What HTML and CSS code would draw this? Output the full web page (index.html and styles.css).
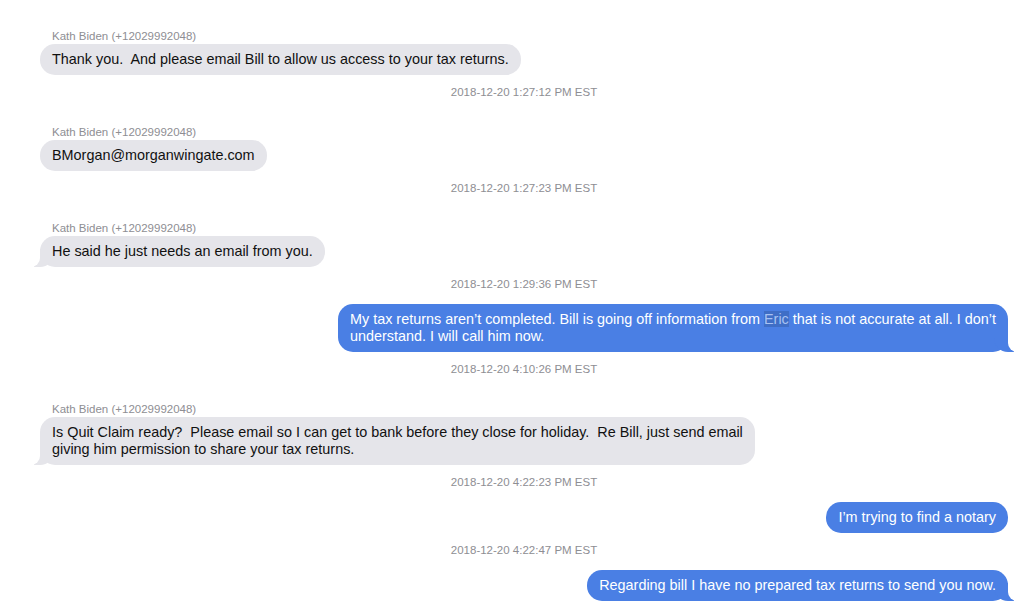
FILE: index.html
```html
<!DOCTYPE html>
<html lang="en">
  <head>
    <meta charset="UTF-8" />
    <meta name="viewport" content="width=device-width, initial-scale=1.0" />
    <title>Messages</title>

    <link rel="stylesheet" href="styles.css">
  </head>
  <body>
    <div class="thread">
      <p class="stamp">2018-12-20 1:26:55 PM EST</p>

      <div class="msg in">
        <p class="sender">Kath Biden (+12029992048)</p>
        <p class="bubble">Thank you.  And please email Bill to allow us access to your tax returns.</p>
      </div>
      <p class="stamp">2018-12-20 1:27:12 PM EST</p>

      <div class="msg in">
        <p class="sender">Kath Biden (+12029992048)</p>
        <p class="bubble">BMorgan@morganwingate.com</p>
      </div>
      <p class="stamp">2018-12-20 1:27:23 PM EST</p>

      <div class="msg in">
        <p class="sender">Kath Biden (+12029992048)</p>
        <p class="bubble tail">He said he just needs an email from you.</p>
      </div>
      <p class="stamp">2018-12-20 1:29:36 PM EST</p>

      <div class="msg out">
        <p class="bubble tail">My tax returns aren’t completed. Bill is going off information from <span class="hl">Eric</span> that is not accurate at all. I don’t<br>understand. I will call him now.</p>
      </div>
      <p class="stamp">2018-12-20 4:10:26 PM EST</p>

      <div class="msg in">
        <p class="sender">Kath Biden (+12029992048)</p>
        <p class="bubble tail">Is Quit Claim ready?  Please email so I can get to bank before they close for holiday.  Re Bill, just send email<br>giving him permission to share your tax returns.</p>
      </div>
      <p class="stamp">2018-12-20 4:22:23 PM EST</p>

      <div class="msg out">
        <p class="bubble">I’m trying to find a notary</p>
      </div>
      <p class="stamp">2018-12-20 4:22:47 PM EST</p>

      <div class="msg out">
        <p class="bubble tail">Regarding bill I have no prepared tax returns to send you now.</p>
      </div>
    </div>
  </body>
</html>
```

FILE: styles.css
```css
body {
  margin: 0;
  background: #fff;
  font-family: "Liberation Sans", Arial, sans-serif;
  overflow: hidden;
}

p {
  margin: 0;
}

.thread {
  display: flex;
  flex-direction: column;
  margin-top: -11px;
  padding: 0 16px 0 40px;
}

.stamp {
  align-self: center;
  margin-top: 10px;
  font-size: 11.5px;
  line-height: 14px;
  color: #8e8e93;
}

.stamp:first-child {
  margin-top: 0;
}

.msg {
  display: flex;
  flex-direction: column;
}

.msg.in {
  align-self: flex-start;
  margin-top: 26px;
}

.msg.out {
  align-self: flex-end;
  margin-top: 13px;
}

.sender {
  padding-left: 12px;
  margin-bottom: 1px;
  font-size: 11.5px;
  line-height: 14px;
  color: #8e8e93;
}

.bubble {
  position: relative;
  isolation: isolate;
  padding: 7px 12px;
  border-radius: 15px;
  font-size: 14.4px;
  line-height: 17px;
  white-space: pre;
}

.in .bubble {
  align-self: flex-start;
  background: #e5e5ea;
  color: #111;
}

.out .bubble {
  align-self: flex-end;
  background: #4a7fe4;
  color: #fff;
}

/* little curl at the bottom corner */
.bubble.tail::before,
.bubble.tail::after {
  content: "";
  position: absolute;
  bottom: 0;
  z-index: -1;
  height: 18px;
}

.in .bubble.tail::before {
  left: -6px;
  width: 20px;
  background: #e5e5ea;
  border-bottom-right-radius: 14px;
}

.in .bubble.tail::after {
  left: -10px;
  width: 10px;
  background: #fff;
  border-bottom-right-radius: 9px;
}

.out .bubble.tail::before {
  right: -6px;
  width: 20px;
  background: #4a7fe4;
  border-bottom-left-radius: 14px;
}

.out .bubble.tail::after {
  right: -10px;
  width: 10px;
  background: #fff;
  border-bottom-left-radius: 9px;
}

.hl {
  background: #3f6ec6;
  color: #a8c2f2;
}
```
